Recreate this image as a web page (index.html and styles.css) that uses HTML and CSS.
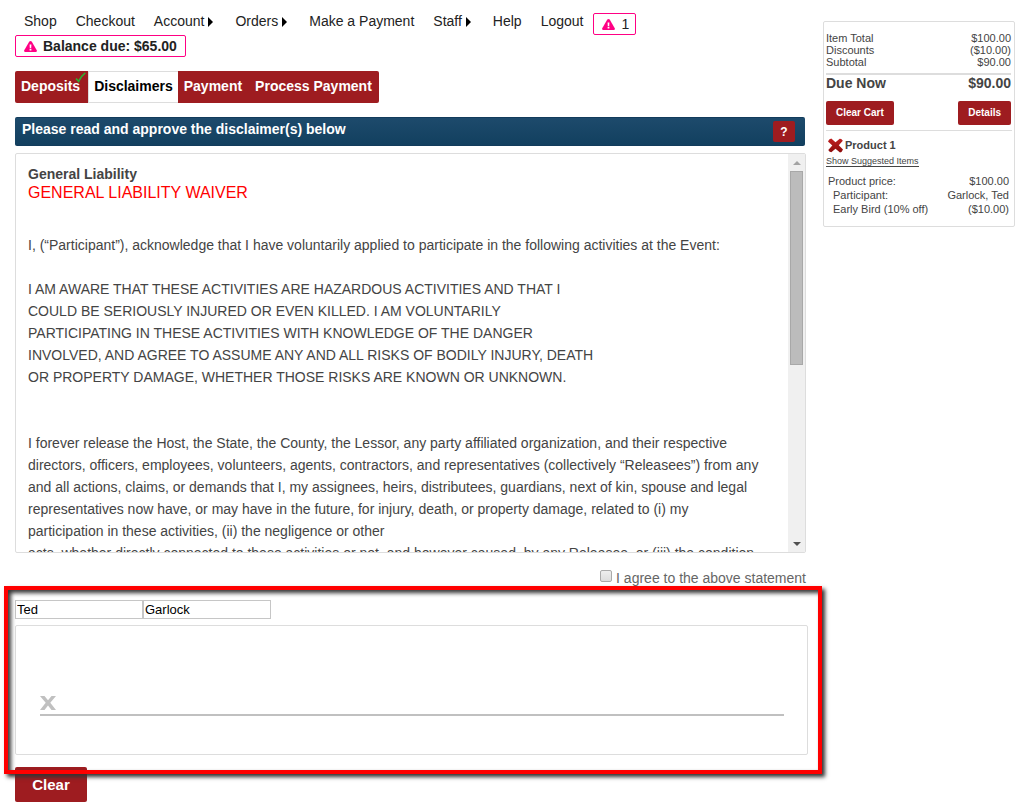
FILE: index.html
```html
<!DOCTYPE html>
<html lang="en">
<head>
<meta charset="utf-8">
<title>Disclaimers</title>
<link rel="stylesheet" href="styles.css">
</head>
<body>
<div class="page">
  <main class="main">
    <nav class="nav">
      <a href="#">Shop</a>
      <a href="#">Checkout</a>
      <a href="#" class="more">Account</a>
      <a href="#" class="more">Orders</a>
      <a href="#">Make a Payment</a>
      <a href="#" class="more">Staff</a>
      <a href="#">Help</a>
      <a href="#">Logout</a>
      <a href="#" class="alert alert-count"><svg class="warn" viewBox="0 0 13 11"><path fill="#ff0084" d="M5.300.6Q6.500-.6 7.700.6L12.900 9.400Q13 11 11.800 11H1.200Q0 11 .1 9.400Z"/><path fill="#fff" d="M5.600 3.400h1.800L7.200 6.900H5.800zM5.600 7.800h1.800v1.600H5.600z"/></svg>1</a>
    </nav>
    <a href="#" class="alert balance"><svg class="warn" viewBox="0 0 13 11"><path fill="#ff0084" d="M5.300.6Q6.500-.6 7.700.6L12.900 9.400Q13 11 11.800 11H1.200Q0 11 .1 9.400Z"/><path fill="#fff" d="M5.600 3.400h1.800L7.200 6.900H5.800zM5.600 7.800h1.800v1.600H5.600z"/></svg>Balance due: $65.00</a>

    <div class="tabs">
      <a href="#" class="tab done">Deposits<svg class="check" viewBox="0 0 11 11"><path fill="none" stroke="#2fae2f" stroke-width="1.6" d="M1 6.5 3.6 9.4Q5.5 4.5 10.3.8"/></svg></a>
      <a href="#" class="tab current">Disclaimers</a>
      <a href="#" class="tab">Payment</a>
      <a href="#" class="tab last">Process Payment</a>
    </div>

    <header class="bar">
      <h1>Please read and approve the disclaimer(s) below</h1>
      <button class="help" type="button">?</button>
    </header>

    <section class="waiver">
      <div class="waiver-text">
        <h2>General Liability</h2>
        <p class="red">GENERAL LIABILITY WAIVER</p>
        <p class="intro">I, (“Participant”), acknowledge that I have voluntarily applied to participate in the following activities at the Event:</p>
        <p class="caps">I AM AWARE THAT THESE ACTIVITIES ARE HAZARDOUS ACTIVITIES AND THAT I<br>COULD BE SERIOUSLY INJURED OR EVEN KILLED. I AM VOLUNTARILY<br>PARTICIPATING IN THESE ACTIVITIES WITH KNOWLEDGE OF THE DANGER<br>INVOLVED, AND AGREE TO ASSUME ANY AND ALL RISKS OF BODILY INJURY, DEATH<br>OR PROPERTY DAMAGE, WHETHER THOSE RISKS ARE KNOWN OR UNKNOWN.</p>
        <p>I forever release the Host, the State, the County, the Lessor, any party affiliated organization, and their respective<br>directors, officers, employees, volunteers, agents, contractors, and representatives (collectively “Releasees”) from any<br>and all actions, claims, or demands that I, my assignees, heirs, distributees, guardians, next of kin, spouse and legal<br>representatives now have, or may have in the future, for injury, death, or property damage, related to (i) my<br>participation in these activities, (ii) the negligence or other<br>acts, whether directly connected to these activities or not, and however caused, by any Releasee, or (iii) the condition</p>
      </div>
      <div class="scroll" aria-hidden="true">
        <span class="arrow up"></span>
        <span class="thumb"></span>
        <span class="arrow down"></span>
      </div>
    </section>

    <div class="agree">
      <input type="checkbox" id="agree"><label for="agree">I agree to the above statement</label>
    </div>

    <section class="sign">
      <div class="names">
        <input type="text" aria-label="First name" value="Ted">
        <input type="text" aria-label="Last name" value="Garlock">
      </div>
      <div class="pad">
        <svg class="x" viewBox="0 0 16 14"><path fill="#c0c0c0" d="M0 0h4.500L8 4.300 11.500 0H16L10.300 6.800 16 14H11.500L8 9.400 4.500 14H0L5.700 6.800Z"/></svg>
      </div>
      <div class="frame"></div>
    </section>
    <button class="btn clear" type="button">Clear</button>
  </main>

  <aside class="cart">
    <dl class="sums">
      <div><dt>Item Total</dt><dd>$100.00</dd></div>
      <div><dt>Discounts</dt><dd>($10.00)</dd></div>
      <div><dt>Subtotal</dt><dd>$90.00</dd></div>
      <div class="due"><dt>Due Now</dt><dd>$90.00</dd></div>
    </dl>
    <div class="actions">
      <button class="btn small" type="button">Clear Cart</button>
      <button class="btn small" type="button">Details</button>
    </div>
    <div class="product">
      <svg class="remove" viewBox="0 0 16 15"><defs><linearGradient id="rm" x2="0" y2="1"><stop stop-color="#c02020"/><stop offset="1" stop-color="#8c0c0c"/></linearGradient></defs><path fill="url(#rm)" d="M3.500 0 8 4 12.500.3Q14.500 0 15.800 2.500L11.500 7.300 16 11.800Q15 14.500 12.800 15L8 11 3.500 14.800Q1 14.500.3 12.300L4.600 7.500 0 3.300Q.8.500 3.500 0Z"/></svg><strong>Product 1</strong>
    </div>
    <a href="#" class="suggest">Show Suggested Items</a>
    <dl class="lines">
      <div><dt>Product price:</dt><dd>$100.00</dd></div>
      <div class="sub"><dt>Participant:</dt><dd>Garlock, Ted</dd></div>
      <div class="sub"><dt>Early Bird (10% off)</dt><dd>($10.00)</dd></div>
    </dl>
  </aside>
</div>
</body>
</html>
```
FILE: styles.css
```css
* { box-sizing: border-box; }
body {
  margin: 0;
  background: #fff;
  color: #444;
  font: 14px/22px "Liberation Sans", Arial, sans-serif;
}
h1, h2, p, dl, dd { margin: 0; }
a { color: inherit; text-decoration: none; }
button { font: inherit; border: 0; padding: 0; cursor: pointer; }
.page {
  display: flex;
  align-items: flex-start;
  gap: 17px;
  padding: 13px 14px 8px 15px;
}
.main { flex: 1; min-width: 0; }

.nav {
  display: flex;
  align-items: flex-start;
  gap: 19px;
  padding-left: 9px;
  color: #222;
  line-height: 16px;
}
.more::after {
  content: "";
  display: inline-block;
  margin: 0 3px 0 4px;
  border: 5px solid transparent;
  border-left-color: #000;
  border-right-width: 0;
  vertical-align: -1px;
}
.alert {
  display: flex;
  align-items: center;
  width: fit-content;
  height: 22px;
  padding: 0 6px 0 8px;
  border: 1px solid #ff0084;
  border-radius: 2px;
  color: #222;
}
.alert-count { margin-left: -9px; }
.warn { width: 13px; height: 11px; margin-right: 6px; }
.balance { padding-right: 8px; font-weight: bold; }

.tabs {
  display: flex;
  width: fit-content;
  margin-top: 14px;
  background: #9e1c20;
  border-radius: 2px;
  color: #fff;
  font-weight: bold;
}
.tab { position: relative; height: 32px; padding: 0 6px; line-height: 31px; }
.done { padding-right: 8px; }
.last { padding: 0 7px; }
.current { padding: 0 5px; background: #fff; color: #000; border: 1px solid #ddd; border-width: 1px 0 1px 1px; line-height: 29px; }
.check { position: absolute; top: 1px; right: 2px; width: 11px; height: 11px; }

.bar {
  display: flex;
  align-items: flex-start;
  justify-content: space-between;
  height: 29px;
  margin: 14px 1px 7px 0;
  padding: 3px 10px 4px 7px;
  border: 1px solid #123c5c;
  border-width: 1px 0;
  border-radius: 2px;
  background: linear-gradient(#1d4a6c, #12405f);
  color: #fff;
}
.bar h1 { font-size: 14px; line-height: 16px; }
.help { width: 22px; height: 21px; border-radius: 2px; background: #9e1c20; color: #fff; font-size: 12px; font-weight: bold; }

.waiver {
  display: flex;
  height: 400px;
  overflow: hidden;
  border: 1px solid #ddd;
  border-radius: 2px;
}
.waiver-text { flex: 1; min-width: 0; overflow: hidden; padding: 12px 0 0 12px; white-space: nowrap; }
.waiver-text h2 { font-size: 14px; line-height: 16px; }
.red { color: #f00; font-size: 16px; line-height: 22px; }
.intro { margin: 30px 0 22px; }
.caps { margin-bottom: 44px; }
.scroll {
  display: flex;
  flex-direction: column;
  align-items: center;
  width: 17px;
  padding: 7px 0 6px;
  background: #f0f0f0;
}
.arrow { border: 4px solid transparent; }
.up { border-top: 0; border-bottom-color: #a3a3a3; }
.down { margin-top: auto; border-bottom: 0; border-top-color: #505050; }
.thumb { width: 13px; height: 194px; margin-top: 6px; border: 1px solid #a8a8a8; background: #bcbcbc; }

.agree { display: flex; justify-content: flex-end; gap: 4px; margin: 14px 0 11px; color: #666; }
.agree input {
  appearance: none;
  width: 12px;
  height: 12px;
  margin: 3px 0 0;
  border: 1px solid #aaa;
  border-radius: 2px;
  background: linear-gradient(#eee, #ddd);
}

.sign { position: relative; }
.names { display: flex; }
.names input {
  width: 128px;
  height: 19px;
  padding: 0 1px;
  border: 1px solid #c6c6c6;
  color: #000;
  font: 13px/17px "Liberation Sans", Arial, sans-serif;
}
.pad {
  height: 130px;
  margin: 6px -2px 0 0;
  padding: 70px 23px 0 24px;
  border: 1px solid #ddd;
  border-radius: 2px;
}
.x { display: block; width: 16px; height: 14px; }
.pad::after { content: ""; display: block; height: 2px; margin-top: 4px; background: #c0c0c0; }
.frame {
  position: absolute;
  inset: -14px -16px -19px -11px;
  border: 4px solid #f00;
  box-shadow: 3px 3px 4px #333, inset 3px 3px 4px #333;
  pointer-events: none;
}
.btn { border-radius: 2px; background: #9e1c20; color: #fff; font-weight: bold; }
.clear { display: block; width: 72px; height: 35px; margin-top: 12px; font-size: 15px; }

.cart {
  width: 192px;
  margin-top: 8px;
  padding: 10px 2px;
  border: 1px solid #ddd;
  border-radius: 2px;
  font-size: 11px;
  line-height: 12px;
}
.cart dl div { display: flex; justify-content: space-between; }
.sums { padding-right: 1px; }
.sums .due { margin-top: 5px; border-top: 2px solid #ddd; font-size: 14px; line-height: 16px; font-weight: bold; }
.actions { display: flex; justify-content: space-between; margin-top: 10px; padding: 0 1px 5px 0; border-bottom: 1px solid #ddd; }
.small { height: 24px; padding: 0 10px; font-size: 10px; }
.product { display: flex; align-items: center; gap: 2px; margin: 6px 0 0 2px; line-height: 16px; }
.remove { width: 15px; height: 15px; }
.suggest { display: block; width: fit-content; margin-top: 3px; font-size: 9px; line-height: 10px; border-bottom: 1px solid #444; }
.lines { margin-top: 7px; padding: 0 3px 0 2px; line-height: 14px; }
.lines .sub { padding-left: 5px; }
```
